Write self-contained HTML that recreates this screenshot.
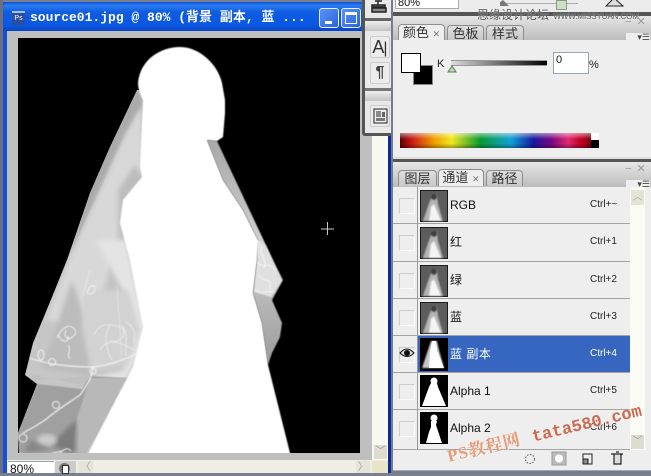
<!DOCTYPE html>
<html><head><meta charset="utf-8">
<style>
html,body{margin:0;padding:0}
body{width:651px;height:473px;position:relative;overflow:hidden;background:#7a7f90;font-family:"Liberation Sans","Noto Sans CJK SC",sans-serif;color:#111}
.a{position:absolute}
.tab{position:absolute;box-sizing:border-box;border:1px solid #8e8e8e;border-bottom:none;border-radius:4px 4px 0 0;background:linear-gradient(#dedede,#c8c8c8);font-size:13px;line-height:15px;text-align:center;color:#333}
.tab.on{background:#eee;height:17px}
.row{position:absolute;left:393px;width:237px;height:37px;box-sizing:border-box;border-bottom:1.5px solid #a4a4a2;background:#eee}
.row .v{position:absolute;left:24px;top:0;bottom:0;width:1px;background:#9a9a9a}
.row .b{position:absolute;left:6px;top:11px;width:16px;height:16px;box-sizing:border-box;border:1px solid #ccc;border-right-color:#fafafa;border-bottom-color:#fafafa}
.row svg{position:absolute;left:27px;top:3px}
.row .n{position:absolute;left:57px;top:10px;font-size:12px;line-height:16px;white-space:nowrap}
.row .k{position:absolute;left:197px;top:12px;font-size:10px;line-height:12px;color:#222}
.tb{position:absolute;left:370px;width:20px;height:22px;box-sizing:border-box;border:1px solid #ccc;border-radius:2px;background:#ececec}
</style></head><body>
<svg width="0" height="0" style="position:absolute"><defs>
<filter id="tb"><feGaussianBlur stdDeviation=".9"/></filter>
<symbol id="th" viewBox="0 0 28 32"><rect width="28" height="32" fill="#1c1c1c"/><rect x="1" y="1" width="26" height="30" fill="#5c5c5c"/><g filter="url(#tb)"><path d="M3 31 L8 16 L12 6 L17 5 L18 14 L23 31Z" fill="#b4b4b4"/><path d="M9 31 L11 17 L14 14 L21 31Z" fill="#f4f4f4"/><circle cx="14" cy="7" r="3" fill="#3c3c3c"/></g></symbol>
</defs></svg>

<!-- document window -->
<div class="a" style="left:0;top:0;width:3px;height:473px;background:#6d6f80"></div>
<div class="a" style="left:3px;top:2px;width:388px;height:471px;background:#1450d8"></div>
<div class="a" style="left:388px;top:30px;width:3px;height:443px;background:#0c2c94"></div>
<div class="a" style="left:3px;top:2px;width:365px;height:29px;border-radius:5px 0 0 0;background:linear-gradient(#0a50d8 0,#2a7cf0 12%,#0f5ce0 35%,#0a58e4 80%,#0a44c0 100%)"></div>
<div class="a" style="left:12px;top:11px;width:13px;height:14px;background:#2a4e9c;border-top:2px solid #a8c0e8;box-sizing:border-box;color:#fff;font-size:7px;line-height:12px;text-align:center">Ps</div>
<div class="a" style="left:30px;top:9px;color:#fff;font:bold 13px/17px 'Liberation Mono','Noto Sans CJK SC',monospace;white-space:pre">source01.jpg @ 80% (背景 副本, 蓝 ...</div>
<div class="a" style="left:319px;top:8px;width:20px;height:20px;box-sizing:border-box;border:1px solid #e8f0ff;border-radius:3px;background:linear-gradient(135deg,#5a94f4,#2a62dc)"><div class="a" style="left:5px;top:12px;width:7px;height:3px;background:#fff"></div></div>
<div class="a" style="left:341px;top:8px;width:20px;height:20px;box-sizing:border-box;border:1px solid #e8f0ff;border-radius:3px;background:linear-gradient(135deg,#5a94f4,#2a62dc)"><div class="a" style="left:3px;top:3px;width:12px;height:12px;box-sizing:border-box;border:1px solid #fff;border-top-width:3px"></div></div>

<!-- canvas gray -->
<div class="a" style="left:7px;top:31px;width:365px;height:429px;background:#bfbfbf"></div>
<!-- scrollbar -->
<div class="a" style="left:372px;top:31px;width:16px;height:429px;background:#f8f8f2"></div>
<div class="a" style="left:374px;top:445px;width:13px;height:14px;background:#dcdccf;color:#999;font-size:10px;line-height:13px;text-align:center">﹀</div>
<!-- canvas -->
<svg class="a" style="left:18px;top:38px" width="342" height="415" viewBox="18 38 342 415">
<defs>
<linearGradient id="vg" x1="0" y1="0" x2="0" y2="1"><stop offset="0" stop-color="#b4b4b4"/><stop offset=".5" stop-color="#c4c4c4"/><stop offset="1" stop-color="#c8c8c8"/></linearGradient>
<linearGradient id="rg" x1="0" y1="0" x2="0" y2="1"><stop offset="0" stop-color="#a8a8a8"/><stop offset=".45" stop-color="#d0d0d0"/><stop offset="1" stop-color="#9c9c9c"/></linearGradient>
<filter id="bl"><feGaussianBlur stdDeviation=".6"/></filter>
<filter id="bs"><feGaussianBlur stdDeviation="2.500"/></filter>
<clipPath id="vc"><path d="M137 90 L110 147 L90 193 L67 260 L50 302 L33 343 L25 375 L37 384 L18 433 L19 453 L150 453 L150 90Z"/></clipPath>
</defs>
<rect x="18" y="38" width="342" height="415" fill="#000"/>
<g filter="url(#bl)">
<!-- right band -->
<path d="M207 140 L217 141 L273 260 L283 280 L272 300 L282 323 L280 337 L272 353 L268 365 L262 323 L253 293 L257 260 L258 240 L243 210 L223 180Z" fill="url(#rg)"/>
<path d="M257 240 L266 245 L273 260 L282 281 L271 297 L254 292 L257 260Z" fill="#e0e0e0"/>
</g>
<!-- left veil -->
<g clip-path="url(#vc)">
<rect x="18" y="88" width="135" height="365" fill="url(#vg)"/>
<path d="M137 92 L110 147 L90 193 L72 250 L100 190 L125 135 L142 105Z" fill="#aaa" filter="url(#bl)"/>
<path d="M142 105 L125 135 L100 190 L68 262 L46 320 L92 330 L118 240 L118 190 L135 165 L142 177Z" fill="#d8d8d8" filter="url(#bs)"/>
<path d="M96 240 L126 240 L146 330 L135 362 L105 420 L92 378 L124 370 L128 300Z" fill="#e4e4e4" filter="url(#bs)"/>
<path d="M72 280 L52 340 L40 368 L90 375 L85 320Z" fill="#bcbcbc" filter="url(#bs)"/>
<path d="M85 290 L82 330 L92 370 L128 365 L140 330 L128 290Z" fill="#d2d2d2" filter="url(#bs)"/>
<!-- lower sections -->
<path d="M37 384 L82 389 L90 376 L128 378 L100 430 L85 453 L18 453 L18 433Z" fill="#a0a0a0" filter="url(#bl)"/>
<path d="M90 378 L128 378 L100 430 L86 453 L72 453 L77 418Z" fill="#b8b8b8" filter="url(#bl)"/>
<path d="M40 380 L26 382 L34 375 L82 385 L90 376Z" fill="#c0c0c0" filter="url(#bl)"/>
<path d="M76 420 L50 445 L70 453 L76 453Z" fill="#7c7c7c" filter="url(#bs)"/>
<ellipse cx="47" cy="440" rx="10" ry="6" fill="#cccccc" filter="url(#bs)"/>
<path d="M24 453 L30 440 L50 450Z" fill="#868686" filter="url(#bs)"/>
</g>
<!-- body -->
<path d="M180 47 C160 47 140 60 138 83 C138 90 141 95 143 100 L140 167 L142 177 L123 200 L120 223 L130 260 L143 327 L133 367 L100 430 L80 470 L296 470 L290 453 L268 365 L262 323 L253 293 L257 260 L258 240 L243 210 L223 180 L207 140 L217 141 L223 137 L225 113 L225 100 L222 83 C218 65 200 47 180 47Z" fill="#fff" filter="url(#bl)"/>
<!-- lace -->
<g fill="none" stroke="#f2f2f2" stroke-width="1" filter="url(#bl)" opacity=".95">
<path d="M30 358 C45 364 70 367 93 367 C105 366 125 360 138 353" stroke-width="1.200"/>
<path d="M93 367 C92 378 87 385 80 395 C70 402 60 408 50 416 C42 423 32 428 23 433" stroke-width="1.300"/>
<circle cx="56" cy="405" r="3.500"/><circle cx="23" cy="438" r="4"/><ellipse cx="41" cy="355" rx="3" ry="5"/><circle cx="52" cy="362" r="3.500"/><circle cx="93" cy="371" r="3"/>
<path d="M57 338 C62 326 72 322 76 332 C72 342 62 340 66 330 M58 334 C62 345 70 342 68 336 M68 345 C72 350 66 355 70 359"/>
<path d="M88 290 C94 280 98 290 92 294 C86 296 86 286 94 286"/>
<path d="M94 335 C100 320 115 325 122 328 C128 335 118 345 110 340 M100 350 C108 335 125 345 135 350 M110 325 C102 335 108 355 112 360 M122 325 C130 335 124 350 126 356 M125 322 C132 325 136 330 134 342" opacity=".75"/>
<path d="M117 287 L122 360" opacity=".5"/><path d="M83 295 L90 270" opacity=".6"/>
<path d="M60 453 C64 449 68 447 71 451 M52 453 L62 451"/>
</g>
<g fill="none" stroke="#f4f4f4" stroke-width="1" filter="url(#bl)">
<path d="M258 262 C262 270 270 260 275 270 M258 275 C265 285 272 275 270 290 M255 290 C262 295 268 290 275 292 M262 245 C258 255 268 258 264 268"/>
</g>
<path d="M321 229 H334 M327.500 222 V235" stroke="#c8c8c8" stroke-width="1"/>
</svg>

<!-- status bar -->
<div class="a" style="left:7px;top:460px;width:381px;height:13px;background:#f0ede4"></div>
<div class="a" style="left:8px;top:461px;width:46px;height:12px;background:#fff;border-top:1px solid #9aa;box-sizing:border-box;font-size:12px;line-height:14px;padding-left:2px">80%</div>
<div class="a" style="left:55px;top:461px;width:21px;height:12px;background:#ccc"><div class="a" style="left:4px;top:2px;width:11px;height:11px;border-radius:50%;background:#777"></div><div class="a" style="left:7px;top:4px;width:7px;height:9px;background:#fff;border:1px solid #333;box-sizing:border-box"></div></div>
<div class="a" style="left:78px;top:461px;width:15px;height:12px;background:#e4e4d8;color:#aaa;font-size:11px;line-height:12px;text-align:center">〈</div>
<div class="a" style="left:356px;top:461px;width:14px;height:12px;background:#e4e4d8;color:#aaa;font-size:11px;line-height:12px;text-align:center">〉</div>
<div class="a" style="left:372px;top:461px;width:16px;height:12px;background:#e8e4c8"></div>

<!-- toolbox -->
<div class="a" style="left:362px;top:0;width:29px;height:136px;background:#555;border-radius:0 0 0 3px"></div>
<div class="a" style="left:365px;top:0;width:26px;height:133px;background:#e9e9e9"></div>
<div class="a" style="left:365px;top:18px;width:26px;height:3px;background:#666"></div>
<div class="a" style="left:365px;top:21px;width:26px;height:10px;background:linear-gradient(#eee,#c4c4c4)"></div>
<div class="a" style="left:365px;top:88px;width:26px;height:3px;background:#777"></div>
<div class="a" style="left:365px;top:91px;width:26px;height:10px;background:linear-gradient(#eee,#c4c4c4)"></div>
<svg class="a" style="left:369px;top:0" width="20" height="14"><path d="M6 1 H13 M9 1 V5 M3 5 H16 V7 H3Z M3 8 H17 V12 H3Z" stroke="#222" stroke-width="1.500" fill="#888"/></svg>
<div class="tb" style="top:36px;font-size:18px;line-height:20px;text-align:center;color:#333">A<span style="font-weight:normal;font-size:16px;margin-left:-1px">|</span></div>
<div class="tb" style="top:62px;font-size:16px;line-height:20px;text-align:center;color:#444;font-weight:bold">¶</div>
<div class="tb" style="top:105px"><svg width="18" height="20" style="position:absolute;left:0;top:0"><rect x="3" y="3" width="13" height="14" fill="#eee" stroke="#222"/><path d="M5 6 H10 M5 8 H10 M5 10 H10" stroke="#222"/><rect x="11" y="6" width="3" height="5" fill="#666"/><rect x="5" y="12" width="9" height="3" fill="#777"/></svg></div>

<!-- top strip -->
<div class="a" style="left:391px;top:0;width:260px;height:473px;background:#767b8e"></div>
<div class="a" style="left:393px;top:0;width:258px;height:12px;background:#ececec"></div>
<div class="a" style="left:395px;top:0;width:60px;height:8px;background:#fff;border:1px solid #aaa;border-top:0;font-size:11px;line-height:6px;padding-left:2px">80%</div>
<div class="a" style="left:503px;top:3px;width:75px;height:1px;background:#aaa"></div>
<div class="a" style="left:556px;top:0;width:9px;height:8px;background:#d0e0c8;border:1px solid #8a9a84"></div>
<svg class="a" style="left:500px;top:0" width="130" height="8"><path d="M-4 5 L4 -1 L10 5Z" fill="#777" transform="translate(-1 1)"/></svg>
<svg class="a" style="left:605px;top:0" width="20" height="8"><path d="M1 6 L9 -2 L18 6Z" fill="#ddd" stroke="#222"/></svg>
<div class="a" style="left:393px;top:12px;width:258px;height:4px;background:#555"></div>

<!-- color panel -->
<div class="a" style="left:393px;top:16px;width:258px;height:24px;background:linear-gradient(#e6e6e6,#bcbcbc)"></div>
<div class="tab on" style="left:398px;top:24px;width:47px">颜色 <span style="font-size:9px;color:#777">✕</span></div>
<div class="tab" style="left:447px;top:25px;width:37px;height:15px">色板</div>
<div class="tab" style="left:486px;top:25px;width:38px;height:15px">样式</div>
<div class="a" style="left:626px;top:33px;width:24px;height:7px;background:#eee;font-size:9px;line-height:8px;text-align:right;color:#444">▾☰</div>
<div class="a" style="left:393px;top:40px;width:258px;height:117px;background:#eee"></div>
<div class="a" style="left:413px;top:65px;width:20px;height:20px;box-sizing:border-box;background:#000;border:1px solid #888;outline:1px solid #eee"></div>
<div class="a" style="left:401px;top:53px;width:20px;height:20px;box-sizing:border-box;background:#fff;border:1px solid #000"></div>
<div class="a" style="left:437px;top:57px;font-size:11px;line-height:14px;color:#222">K</div>
<div class="a" style="left:451px;top:60px;width:96px;height:6px;background:linear-gradient(90deg,#ddd,#000);border:1px solid #999;border-right:0;border-left:0;box-sizing:border-box"></div>
<svg class="a" style="left:446px;top:65px" width="12" height="9"><path d="M6 1 L10 7 H2Z" fill="#b8dcb0" stroke="#5a7a58"/></svg>
<div class="a" style="left:553px;top:52px;width:36px;height:22px;box-sizing:border-box;background:#fff;border:1px solid #98a4b8;font-size:11px;line-height:14px;padding-left:2px">0</div>
<div class="a" style="left:589px;top:58px;font-size:11px;line-height:14px;color:#222">%</div>
<div class="a" style="left:400px;top:133px;width:191px;height:15px;background:linear-gradient(90deg,#600000 0,#c81818 6%,#f0a000 18%,#f0e820 27%,#0a9a30 42%,#10a0d8 58%,#1818a0 70%,#800880 80%,#e02a70 88%,#c00020 95%,#7a0010 100%)"></div>
<div class="a" style="left:400px;top:133px;width:191px;height:15px;background:linear-gradient(#ffffff80,#0000 40%,#0000 70%,#00000055)"></div>
<div class="a" style="left:591px;top:133px;width:8px;height:7px;background:#fff"></div>
<div class="a" style="left:591px;top:140px;width:8px;height:8px;background:#000"></div>
<div class="a" style="left:393px;top:157px;width:258px;height:3px;background:#ddd"></div>
<div class="a" style="left:393px;top:159px;width:258px;height:3px;background:#555"></div>

<!-- channels panel -->
<div class="a" style="left:393px;top:162px;width:258px;height:25px;background:linear-gradient(#e6e6e6,#bcbcbc)"></div>
<div class="tab" style="left:398px;top:170px;width:39px;height:16px">图层</div>
<div class="tab on" style="left:438px;top:169px;width:46px">通道 <span style="font-size:9px;color:#777">✕</span></div>
<div class="tab" style="left:486px;top:170px;width:37px;height:16px">路径</div>
<div class="a" style="left:626px;top:180px;width:24px;height:7px;background:#eee;font-size:9px;line-height:8px;text-align:right;color:#444">▾☰</div>
<div class="a" style="left:625px;top:163px;font-size:11px;line-height:12px;color:#999;letter-spacing:1px">− ✕</div>
<div class="a" style="left:625px;top:16px;font-size:11px;line-height:12px;color:#999;letter-spacing:1px">− ✕</div>
<div class="a" style="left:393px;top:187px;width:258px;height:284px;background:#eee"></div>
<div class="a" style="left:630px;top:187px;width:15px;height:263px;background:#fbfbf6"></div>
<div class="a" style="left:631px;top:190px;width:13px;height:15px;background:#e4e4d4;color:#aaa;font-size:10px;line-height:15px;text-align:center">︿</div>
<div class="a" style="left:631px;top:435px;width:13px;height:14px;background:#dcdccf;color:#999;font-size:10px;line-height:14px;text-align:center">﹀</div>

<div class="row" style="top:187px"><div class="v"></div><div class="b"></div>
<svg width="28" height="32"><use href="#th"/></svg><div class="n">RGB</div><div class="k">Ctrl+~</div></div>
<div class="row" style="top:224px;height:38px"><div class="v"></div><div class="b"></div>
<svg width="28" height="32"><use href="#th"/></svg><div class="n">红</div><div class="k">Ctrl+1</div></div>
<div class="row" style="top:262px"><div class="v"></div><div class="b"></div>
<svg width="28" height="32"><use href="#th"/></svg><div class="n">绿</div><div class="k">Ctrl+2</div></div>
<div class="row" style="top:299px"><div class="v"></div><div class="b"></div>
<svg width="28" height="32"><use href="#th"/></svg><div class="n">蓝</div><div class="k">Ctrl+3</div></div>
<div class="row" style="top:336px;background:#3666bf;border-bottom-color:#a4a4a2"><div class="a" style="left:0;top:0;width:24px;height:36px;background:#eee"></div><div class="v"></div><div class="b"></div>
<svg width="16" height="12" style="left:6px;top:11px"><path d="M1 6 Q8 -2 15 6 Q8 13 1 6Z" fill="#ddd" stroke="#111"/><circle cx="8" cy="6" r="3" fill="#111"/></svg>
<svg width="28" height="33" style="top:2px"><rect width="28" height="33" fill="#000"/><path d="M11 3 L17 3 L19 12 L24 30 H2 L6 18Z" fill="#c8c8c8" filter="url(#tb)"/><path d="M12 3 L16 3 L17 12 L24 30 H9 L10 14Z" fill="#fff"/></svg>
<div class="n" style="color:#fff;letter-spacing:.5px">蓝 副本</div><div class="k" style="color:#fff">Ctrl+4</div></div>
<div class="row" style="top:373px"><div class="v"></div><div class="b"></div>
<svg width="28" height="32" style="top:2px"><rect width="28" height="32" fill="#000"/><circle cx="14" cy="6" r="3.500" fill="#fff"/><path d="M11 8 L17 8 L18 12 L26 31 H2 L9 12Z" fill="#fff"/></svg><div class="n">Alpha 1</div><div class="k">Ctrl+5</div></div>
<div class="row" style="top:410px;height:40px;border-bottom:1px solid #a4a4a2"><div class="v"></div><div class="b"></div>
<svg width="28" height="32" style="top:2px"><rect width="28" height="32" fill="#000"/><circle cx="14" cy="6" r="3.500" fill="#fff"/><path d="M11 9 L17 9 L16 13 L19 22 L22 31 H6 L9 20 L11 15Z" fill="#fff"/></svg><div class="n">Alpha 2</div><div class="k">Ctrl+6</div></div>

<!-- footer -->
<div class="a" style="left:393px;top:451px;width:258px;height:19px;background:#eee;border-bottom:1px solid #aaa"></div>
<svg class="a" style="left:520px;top:451px" width="125" height="19">
<circle cx="10" cy="8" r="4.500" fill="none" stroke="#555" stroke-dasharray="1.500 1.500"/>
<rect x="32" y="1" width="14" height="13" fill="#bbb" stroke="#999"/><circle cx="39" cy="7.500" r="4" fill="#fff"/>
<rect x="63" y="3" width="9" height="10" fill="#eee" stroke="#222"/><rect x="63" y="8" width="5" height="5" fill="#888" stroke="#222"/>
<path d="M91 3 H103 M94 3 V13 H101 V3 M96 1 H99" fill="#ddd" stroke="#222" stroke-width="1.200"/>
</svg>

<!-- watermarks -->
<div class="a" style="left:477px;top:8px;font-size:12px;line-height:15px;color:#555;white-space:nowrap;text-shadow:0 0 1px #fff">思缘设计论坛 <span style="font-size:8px;letter-spacing:-.1px;margin-left:1px">WWW.MISSYUAN.COM</span></div>
<div class="a" style="left:448px;top:447px;font:bold 17px/20px 'Liberation Serif','Noto Serif CJK SC',serif;color:#e89a78;white-space:nowrap;transform:rotate(-13.5deg);transform-origin:0 50%;letter-spacing:.8px;text-shadow:1px 1px 0 #fff8">PS教程网<span style="margin-left:12px;font-family:'Liberation Mono',monospace;font-size:17px;letter-spacing:0;color:#cc6a50">tata580.com</span></div>
</body></html>
